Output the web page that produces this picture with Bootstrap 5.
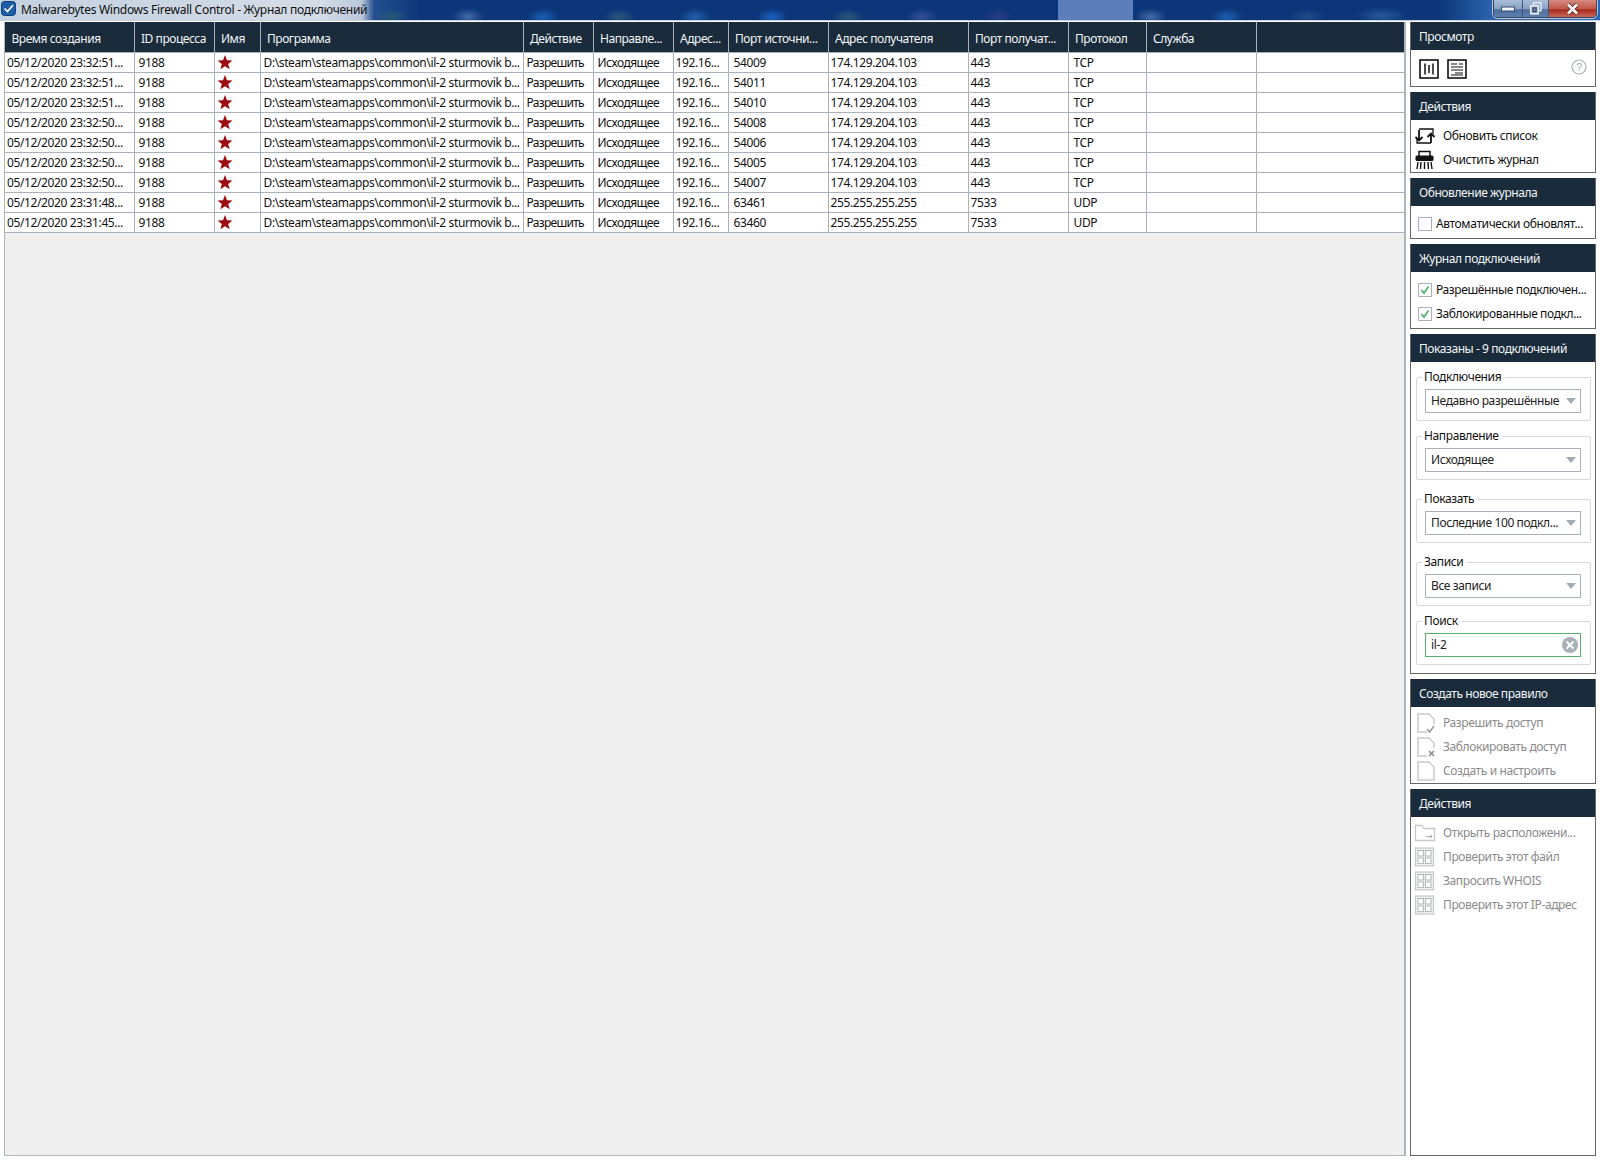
<!doctype html>
<html lang="ru">
<head>
<meta charset="utf-8">
<title>Malwarebytes Windows Firewall Control</title>
<link href="https://cdn.jsdelivr.net/npm/bootstrap@5.3.0/dist/css/bootstrap.min.css" rel="stylesheet">
<style>
html,body{height:100%;overflow:hidden}
body{font-family:"Noto Sans","Open Sans","Liberation Sans",sans-serif;font-size:12px;color:#111;background:#fff;letter-spacing:-.38px}
.app{width:1600px;height:1160px}
.titlebar{height:21px;background:
 radial-gradient(ellipse 16px 8px at 392px 17px,#265a72 0,transparent 100%),
 radial-gradient(ellipse 16px 9px at 468px 17px,#466aa8 0,transparent 100%),
 radial-gradient(ellipse 16px 9px at 543px 17px,#1b60b8 0,transparent 100%),
 radial-gradient(ellipse 16px 8px at 619px 17px,#2b5878 0,transparent 100%),
 radial-gradient(ellipse 16px 9px at 695px 17px,#2360b0 0,transparent 100%),
 radial-gradient(ellipse 16px 9px at 772px 17px,#1b62c2 0,transparent 100%),
 radial-gradient(ellipse 16px 8px at 848px 17px,#2b5878 0,transparent 100%),
 radial-gradient(ellipse 16px 9px at 922px 17px,#34509c 0,transparent 100%),
 radial-gradient(ellipse 16px 9px at 998px 17px,#273c84 0,transparent 100%),
 radial-gradient(ellipse 16px 9px at 1151px 17px,#466aa8 0,transparent 100%),
 radial-gradient(ellipse 16px 9px at 1227px 17px,#1b60b8 0,transparent 100%),
 radial-gradient(ellipse 18px 8px at 1307px 17px,#1e4c88 0,transparent 100%),
 radial-gradient(ellipse 26px 9px at 1382px 16px,#27589e 0,transparent 100%),
 linear-gradient(#5c7fbc,#5c7fbc) 1058px 0/75px 21px no-repeat,
 linear-gradient(90deg,#c2d0e0 0,#d4dce6 320px,#b9c7da 362px,#24508f 374px,#0c3679 420px,#0c3679 1440px,#2c66b0 1494px,#2c66b0 1600px);
 border-bottom:1px solid #c6d0dd;font-size:12px;letter-spacing:-.28px}
.titlemark{margin-left:1px;flex:none}
.titletext{padding-left:4px;color:#101010;line-height:20px}
.winbtns{margin-right:3px;height:18px;border:1px solid #34465f;border-top:0;border-radius:0 0 5px 5px;overflow:hidden;box-shadow:0 0 0 1px #b8c7da}
.winb{height:17px;display:flex;align-items:center;justify-content:center;border-right:1px solid #40587a;background:linear-gradient(#a9bdd6,#8aa3c4 50%,#4f6f9f 58%,#5f80ad)}
.winb.mn{width:29px}.winb.mx{width:26px}
.winb.cl{width:47px;border-right:0;background:linear-gradient(#d58b80,#c4574a 50%,#a92a1e 58%,#c6695c)}
.workarea{height:1139px;padding:1px 4px 4px 4px}
.mainpane{width:1402px;flex:none;background:#efefef;border:1px solid #adb5bd;border-top:0;border-right:2px solid #adb5bd;height:1134px;overflow:hidden}
.gridtable{table-layout:fixed;width:1400px;margin:0;border-collapse:collapse;font-size:12px;color:#111}
.gridtable th{height:30px;padding:5px 0 0 6.5px;background:#1a2b3b;color:#f2f5f8;font-weight:400;font-size:12px;letter-spacing:-.45px;border:0;border-right:1px solid #a9b1bd;border-bottom:1px solid #a9b1bd;white-space:nowrap;overflow:hidden;vertical-align:middle}
.gridtable td{height:20px;padding:0 0 0 2px;background:#fff;border:0;border-right:1px solid #a9b1bd;border-bottom:1px solid #a9b1bd;white-space:nowrap;overflow:hidden;vertical-align:middle;line-height:19px;color:#111;box-shadow:none}
.gridtable td:nth-child(2),.gridtable td:nth-child(6){padding-left:4px}
.gridtable td:nth-child(8),.gridtable td:nth-child(11){padding-left:5px}
.gridtable td:nth-child(4),.gridtable td:nth-child(5){padding-left:3px}
.gridtable td:nth-child(5){letter-spacing:-.7px}
.gridtable td:nth-child(6){letter-spacing:-.5px}
.gridtable th:last-child,.gridtable td:last-child{border-right:0}
.staricon{display:block;margin-left:0}
.sidepane{width:186px;flex:none;margin-left:4px;height:1134px}
.sect{border:1px solid #666;border-top:0;background:#fff;margin-bottom:5px;flex:none}
.secthead{height:28px;background:#1a2b3b;color:#f2f5f8;font-size:12px;letter-spacing:-.43px;line-height:29px;padding-left:8px;white-space:nowrap}
.s1 .sectbody{height:36px;padding:9px 8px 0 8px}
.s2 .sectbody{height:52px;padding-top:4px}
.s3 .sectbody{height:32px;padding-top:6px}
.s4 .sectbody{height:56px;padding-top:6px}
.s5 .sectbody{height:311px;padding:15px 4px 0 5px}
.s6 .sectbody{height:76px;padding-top:4px}
.s7{flex:1 1 auto;margin-bottom:0}
.s7 .sectbody{padding-top:4px}
.s6 .actrow,.s7 .actrow{color:#8a8a8a}
.actrow{height:24px;display:flex;align-items:center;padding-left:3px;white-space:nowrap}
.actrow svg{flex:none;width:22px;height:22px;margin-right:7px}
.chkrow{height:24px;display:flex;align-items:center;padding-left:7px;white-space:nowrap}
.fakechk{width:14px;height:14px;border:1px solid #a9b1bd;margin-right:4px;flex:none;display:flex;align-items:center;justify-content:center;background:#fff}
.fset{display:block;border:1px solid #d5d8dc;border-radius:2px;height:44px;padding:11px 9px 0 8px;position:relative;margin:0 0 15px 0}
.fset.gapa{margin-bottom:19px}
.fset.gapb{margin-bottom:19px}
.fsetlabel{position:absolute;left:5px;top:-8px;background:#fff;padding:0 4px 0 2px;line-height:14px;font-size:12px;color:#111}
.fakeselect{height:24px;border:1px solid #a9b1bd;display:flex;align-items:center;padding-left:5px;justify-content:space-between;white-space:nowrap;color:#222;background:#fff}
.fakeselect.active{border-color:#55b06c;padding-right:1px}
.caretdown{width:0;height:0;border-left:5px solid transparent;border-right:5px solid transparent;border-top:6px solid #a3abb5;margin-right:4px;flex:none}
</style>
</head>
<body>
<div class="app">
  <div class="titlebar d-flex align-items-start">
    <svg width="16" height="17" viewBox="0 0 16 17" class="titlemark"><rect x=".5" y="1.5" width="14" height="14" rx="3" fill="#1c5fa8" stroke="#0e3f7c"/><path d="M3.5 8.5 6.5 11.5 12 5" fill="none" stroke="#fff" stroke-width="1.6"/></svg>
    <div class="titletext">Malwarebytes Windows Firewall Control - Журнал подключений</div>
    <div class="winbtns d-flex ms-auto">
      <div class="winb mn"><svg width="14" height="6" viewBox="0 0 14 6"><rect x=".5" y="1" width="13" height="4" fill="#f1f4f8" stroke="#35496a"/></svg></div>
      <div class="winb mx"><svg width="12" height="13" viewBox="0 0 12 13"><rect x="3.500" y=".8" width="7.500" height="8" fill="none" stroke="#eef2f6" stroke-width="1.300"/><rect x=".8" y="3.800" width="7.500" height="8" fill="#7d96b8" stroke="#eef2f6" stroke-width="1.500"/><rect x="3" y="6" width="3" height="3.500" fill="none" stroke="#2b3c58"/></svg></div>
      <div class="winb cl"><svg width="15" height="12" viewBox="0 0 15 12"><path d="M3 1.500 12 10.500M12 1.500 3 10.500" stroke="#4a1a14" stroke-width="4.400"/><path d="M3 1.500 12 10.500M12 1.500 3 10.500" stroke="#f7f3f0" stroke-width="3"/></svg></div>
    </div>
  </div>
  <div class="workarea d-flex align-items-start">
    <div class="mainpane">
      <table class="table gridtable">
        <colgroup><col style="width:129px"><col style="width:80px"><col style="width:46px"><col style="width:263px"><col style="width:70px"><col style="width:80px"><col style="width:55px"><col style="width:100px"><col style="width:140px"><col style="width:100px"><col style="width:78px"><col style="width:110px"><col></colgroup>
        <thead><tr><th>Время создания</th><th>ID процесса</th><th>Имя</th><th>Программа</th><th>Действие</th><th>Направле...</th><th>Адрес...</th><th>Порт источни...</th><th>Адрес получателя</th><th>Порт получат...</th><th>Протокол</th><th>Служба</th><th></th></tr></thead>
        <tbody id="rows"></tbody>
      </table>
    </div>
    <div class="sidepane d-flex flex-column">
      <div class="sect s1"><div class="secthead">Просмотр</div><div class="sectbody d-flex align-items-start">
        <svg width="20" height="20" viewBox="0 0 20 20" class="me-2"><rect x="1" y="1" width="18" height="18" fill="none" stroke="#111" stroke-width="1.6"/><path d="M6 4.500V15.500M10 6V14M14 4.500V15.500" stroke="#111" stroke-width="1.500"/></svg>
        <svg width="20" height="20" viewBox="0 0 20 20"><rect x="1" y="1" width="18" height="18" fill="none" stroke="#111" stroke-width="1.6"/><path d="M4 5H10M12 5H16M4 8H16M4 11H16M8 14H16M4 16H16" stroke="#111" stroke-width="1.200"/></svg>
        <svg width="16" height="16" viewBox="0 0 16 16" class="ms-auto"><circle cx="8" cy="8" r="7" fill="none" stroke="#a8afb7" stroke-width="1.200"/><text x="8" y="12" text-anchor="middle" font-size="11" fill="#a8afb7" font-family="Liberation Sans">?</text></svg>
      </div></div>
      <div class="sect s2"><div class="secthead">Действия</div><div class="sectbody">
        <div class="actrow"><svg viewBox="0 0 22 22"><path d="M5 4H19V9M17 18H3V13" fill="none" stroke="#111" stroke-width="1.300"/><path d="M5 17V8M1.500 10 5 6.500 8.500 10" transform="rotate(180 5 11)" fill="none" stroke="#111" stroke-width="1.800"/><path d="M17 18V10M13.500 12 17 8.500 20.500 12" fill="none" stroke="#111" stroke-width="1.800"/></svg>Обновить список</div>
        <div class="actrow"><svg viewBox="0 0 22 22"><path d="M5 7V2.500H16V7" fill="none" stroke="#111" stroke-width="1.500"/><rect x="1.500" y="6.500" width="18" height="5.500" rx="1.500" fill="#111"/><path d="M4 13 3 20M7 13 6.500 20M10.500 13V20M14 13 14.500 20M17 13 18 20" stroke="#111" stroke-width="1.400"/></svg>Очистить журнал</div>
      </div></div>
      <div class="sect s3"><div class="secthead">Обновление журнала</div><div class="sectbody">
        <div class="chkrow"><span class="fakechk"></span>Автоматически обновлят...</div>
      </div></div>
      <div class="sect s4"><div class="secthead">Журнал подключений</div><div class="sectbody">
        <div class="chkrow"><span class="fakechk"><svg width="10" height="10" viewBox="0 0 10 10"><path d="M1.500 5 4 8 8.500 1.500" fill="none" stroke="#52ae6b" stroke-width="1.700"/></svg></span>Разрешённые подключен...</div>
        <div class="chkrow"><span class="fakechk"><svg width="10" height="10" viewBox="0 0 10 10"><path d="M1.500 5 4 8 8.500 1.500" fill="none" stroke="#52ae6b" stroke-width="1.700"/></svg></span>Заблокированные подкл...</div>
      </div></div>
      <div class="sect s5"><div class="secthead">Показаны - 9 подключений</div><div class="sectbody">
        <div class="fset"><span class="fsetlabel">Подключения</span><div class="fakeselect"><span>Недавно разрешённые</span><i class="caretdown"></i></div></div>
        <div class="fset gapa"><span class="fsetlabel">Направление</span><div class="fakeselect"><span>Исходящее</span><i class="caretdown"></i></div></div>
        <div class="fset gapb"><span class="fsetlabel">Показать</span><div class="fakeselect"><span>Последние 100 подкл...</span><i class="caretdown"></i></div></div>
        <div class="fset"><span class="fsetlabel">Записи</span><div class="fakeselect"><span>Все записи</span><i class="caretdown"></i></div></div>
        <div class="fset"><span class="fsetlabel">Поиск</span><div class="fakeselect active"><span>il-2</span><svg width="18" height="18" viewBox="0 0 18 18"><circle cx="9" cy="9" r="8" fill="#a9afb6"/><path d="M5.500 5.500 12.500 12.500M12.500 5.500 5.500 12.500" stroke="#fff" stroke-width="2"/></svg></div></div>
      </div></div>
      <div class="sect s6"><div class="secthead">Создать новое правило</div><div class="sectbody">
        <div class="actrow"><svg viewBox="0 0 22 22"><path d="M13 20H4V2H15L20 7V12" fill="none" stroke="#c6c9cc" stroke-width="1.400"/><path d="M13 17 15.500 20 20 14" fill="none" stroke="#9a9a9a" stroke-width="1.500"/></svg>Разрешить доступ</div>
        <div class="actrow"><svg viewBox="0 0 22 22"><path d="M13 20H4V2H15L20 7V12" fill="none" stroke="#c6c9cc" stroke-width="1.400"/><path d="M15 15 20 20M20 15 15 20" stroke="#8f8f8f" stroke-width="1.700"/></svg>Заблокировать доступ</div>
        <div class="actrow"><svg viewBox="0 0 22 22"><path d="M4 20V2H15L20 7V20Z" fill="none" stroke="#c6c9cc" stroke-width="1.400"/></svg>Создать и настроить</div>
      </div></div>
      <div class="sect s7"><div class="secthead">Действия</div><div class="sectbody">
        <div class="actrow"><svg viewBox="0 0 22 22"><path d="M1.500 18.500V3.500H8L10 6.500H20.500V18.500Z" fill="none" stroke="#c6c9cc" stroke-width="1.300"/><path d="M12 14.500H18M16 12.500 18 14.500 16 16.500" fill="none" stroke="#a8a8a8"/></svg>Открыть расположени...</div>
        <div class="actrow"><svg viewBox="0 0 22 22"><use href="#gridico"/></svg>Проверить этот файл</div>
        <div class="actrow"><svg viewBox="0 0 22 22"><use href="#gridico"/></svg>Запросить WHOIS</div>
        <div class="actrow"><svg viewBox="0 0 22 22"><use href="#gridico"/></svg>Проверить этот IP-адрес</div>
      </div></div>
    </div>
  </div>
</div>
<svg width="0" height="0" class="d-none"><defs><g id="gridico"><rect x="1.500" y="2" width="18" height="18" fill="#efefef" stroke="#c6c9cc" stroke-width="1.200"/><rect x="4" y="4.500" width="5.500" height="5.500" fill="#fff" stroke="#b5b8bb"/><rect x="11.500" y="4.500" width="5.500" height="5.500" fill="#fff" stroke="#b5b8bb"/><rect x="4" y="12" width="5.500" height="5.500" fill="#fff" stroke="#b5b8bb"/><rect x="11.500" y="12" width="5.500" height="5.500" fill="#fff" stroke="#b5b8bb"/></g></defs></svg>
<script>
var data=[
["05/12/2020 23:32:51...","54009","174.129.204.103","443","TCP"],
["05/12/2020 23:32:51...","54011","174.129.204.103","443","TCP"],
["05/12/2020 23:32:51...","54010","174.129.204.103","443","TCP"],
["05/12/2020 23:32:50...","54008","174.129.204.103","443","TCP"],
["05/12/2020 23:32:50...","54006","174.129.204.103","443","TCP"],
["05/12/2020 23:32:50...","54005","174.129.204.103","443","TCP"],
["05/12/2020 23:32:50...","54007","174.129.204.103","443","TCP"],
["05/12/2020 23:31:48...","63461","255.255.255.255","7533","UDP"],
["05/12/2020 23:31:45...","63460","255.255.255.255","7533","UDP"]];
var star='<svg class="staricon" width="16" height="16" viewBox="0 0 24 24"><path d="M12 1.500 15 9.200 23.200 9.700 16.800 14.900 19 23 12 18.500 5 23 7.200 14.900 .8 9.700 9 9.200Z" fill="#9d0c10"/></svg>';
document.getElementById('rows').innerHTML=data.map(function(r){
return '<tr><td>'+r[0]+'</td><td>9188</td><td>'+star+'</td><td>D:\\steam\\steamapps\\common\\il-2 sturmovik b...</td><td>Разрешить</td><td>Исходящее</td><td>192.16...</td><td>'+r[1]+'</td><td>'+r[2]+'</td><td>'+r[3]+'</td><td>'+r[4]+'</td><td></td><td></td></tr>';
}).join('');
</script>
<script src="https://cdn.jsdelivr.net/npm/bootstrap@5.3.0/dist/js/bootstrap.bundle.min.js"></script>
</body>
</html>
